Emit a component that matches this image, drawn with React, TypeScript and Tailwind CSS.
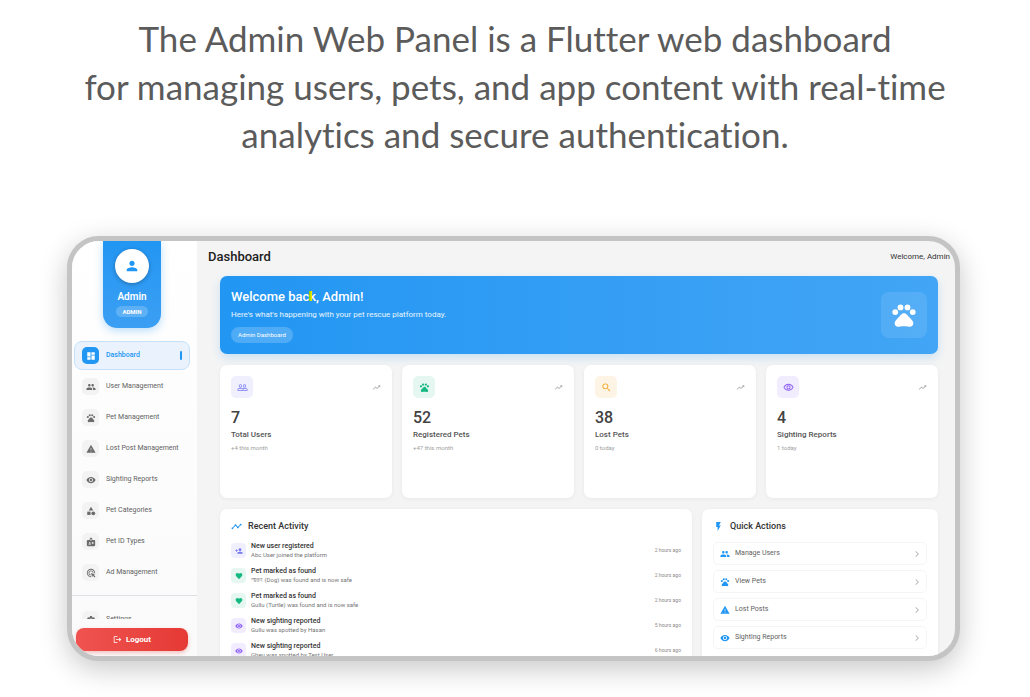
import type { IconType } from "react-icons";
import {
  MdAdsClick, MdBadge, MdCategory, MdChevronRight, MdDashboard, MdFavorite, MdFlashOn,
  MdLogout, MdOutlineVisibility, MdPeople, MdPeopleOutline, MdPerson, MdPersonAdd, MdPets,
  MdSearch, MdSettings, MdTimeline, MdTrendingUp, MdVisibility, MdWarning,
} from "react-icons/md";

type NavItem = { label: string; icon: IconType };
type Stat = { label: string; value: string; note: string; icon: IconType; tone: string };
type Activity = { title: string; detail: string; time: string; icon: IconType; tone: string };

const INDIGO = "bg-[#efeffe] text-[#7679f1]";
const GREEN = "bg-[#e6f7f1] text-[#14b981]";
const AMBER = "bg-[#fef4e5] text-[#f5a623]";
const VIOLET = "bg-[#f2edfe] text-[#8f62f6]";

const navItems: NavItem[] = [
  { label: "User Management", icon: MdPeople },
  { label: "Pet Management", icon: MdPets },
  { label: "Lost Post Management", icon: MdWarning },
  { label: "Sighting Reports", icon: MdVisibility },
  { label: "Pet Categories", icon: MdCategory },
  { label: "Pet ID Types", icon: MdBadge },
  { label: "Ad Management", icon: MdAdsClick },
];

const stats: Stat[] = [
  { label: "Total Users", value: "7", note: "+4 this month", icon: MdPeopleOutline, tone: INDIGO },
  { label: "Registered Pets", value: "52", note: "+47 this month", icon: MdPets, tone: GREEN },
  { label: "Lost Pets", value: "38", note: "0 today", icon: MdSearch, tone: AMBER },
  { label: "Sighting Reports", value: "4", note: "1 today", icon: MdOutlineVisibility, tone: VIOLET },
];

const activities: Activity[] = [
  { title: "New user registered", detail: "Abc User joined the platform", time: "2 hours ago", icon: MdPersonAdd, tone: INDIGO },
  { title: "Pet marked as found", detail: "স্মরণ (Dog) was found and is now safe", time: "2 hours ago", icon: MdFavorite, tone: GREEN },
  { title: "Pet marked as found", detail: "Gullu (Turtle) was found and is now safe", time: "2 hours ago", icon: MdFavorite, tone: GREEN },
  { title: "New sighting reported", detail: "Gullu was spotted by Hasan", time: "5 hours ago", icon: MdVisibility, tone: VIOLET },
  { title: "New sighting reported", detail: "Gheu was spotted by Test User", time: "6 hours ago", icon: MdVisibility, tone: VIOLET },
];

const quickActions: NavItem[] = [
  { label: "Manage Users", icon: MdPeople },
  { label: "View Pets", icon: MdPets },
  { label: "Lost Posts", icon: MdWarning },
  { label: "Sighting Reports", icon: MdVisibility },
];

export default function App() {
  return (
    <div className="min-h-screen bg-white pt-[14px] pb-9 overflow-hidden">
      <h1 className="text-center text-[35px] leading-[48px] text-[#5b5b5b] font-[Lato,sans-serif] [font-variant-ligatures:none]">
        The Admin Web Panel is a Flutter web dashboard
        <br />
        for managing users, pets, and app content with real-time
        <br />
        analytics and secure authentication.
      </h1>

      {/* Device frame */}
      <div className="mt-[78px] ml-[67px] mr-[70px] flex aspect-[21/10] overflow-hidden rounded-[32px] border-[5px] border-[#c4c4c4] bg-[#f4f4f4] font-[Roboto,sans-serif] shadow-[0_8px_28px_rgba(0,0,0,0.22)]">
        <Sidebar />
        <Main />
      </div>
    </div>
  );
}

function Sidebar() {
  return (
    <aside className="flex w-[125px] shrink-0 flex-col bg-linear-to-b from-white to-[#fafafa]">
      {/* Profile */}
      <div className="ml-[31px] flex h-[87px] w-[58px] shrink-0 flex-col items-center rounded-b-[14px] bg-linear-to-b from-[#2196f3] to-[#3b9ff3] pt-2 text-white shadow-[0_3px_8px_rgba(33,150,243,0.3)]">
        <div className="flex size-[34px] items-center justify-center rounded-full bg-white text-[#2196f3] shadow-[0_1px_4px_rgba(0,0,0,0.3)]">
          <MdPerson className="size-4" />
        </div>
        <p className="mt-2 text-[10px] leading-3 font-semibold">Admin</p>
        <span className="mt-[3px] rounded-full bg-white/20 px-[6px] text-[6px] leading-[11px] font-bold">ADMIN</span>
      </div>

      {/* Navigation */}
      <nav className="mt-[13px] flex min-h-0 flex-1 flex-col overflow-hidden">
        <div className="flex flex-col gap-[2px] pr-[7px] pl-[2px]">
          <a href="#dashboard" className="flex h-[29px] items-center rounded-lg border border-[#c5e1f9] bg-[#eaf3fd] px-[7px] text-[7px] font-medium text-[#2196f3]">
            <span className="mr-[7px] flex size-[17px] items-center justify-center rounded-[5px] bg-[#2196f3] text-white">
              <MdDashboard className="size-[10px]" />
            </span>
            Dashboard
            <span className="ml-auto h-[9px] w-[2px] rounded-full bg-[#2196f3]" />
          </a>
          {navItems.map((item) => (
            <NavLink key={item.label} {...item} />
          ))}
        </div>
        <hr className="mt-2 shrink-0 border-[#dfdfe6]" />
        <div className="mt-[9px] pr-[7px] pl-[2px]">
          <NavLink label="Settings" icon={MdSettings} />
        </div>
      </nav>

      <button className="mt-[9px] mr-[9px] mb-[5px] ml-1 flex h-[23px] shrink-0 items-center justify-center gap-1 rounded-lg bg-linear-to-r from-[#ef5350] to-[#e53935] text-[8px] font-bold text-white shadow-[0_2px_4px_rgba(229,57,53,0.3)]">
        <MdLogout className="size-[9px]" />
        Logout
      </button>
    </aside>
  );
}

function NavLink({ label, icon: Icon }: NavItem) {
  return (
    <a href="#" className="flex h-[29px] shrink-0 items-center px-2 text-[7px] text-[#616161]">
      <span className="mr-[7px] flex size-[17px] items-center justify-center rounded-[5px] bg-[#f3f3f3] text-[#6b6b6b]">
        <Icon className="size-[10px]" />
      </span>
      {label}
    </a>
  );
}

function Main() {
  return (
    <main className="flex min-w-0 flex-1 flex-col overflow-hidden">
      <header className="flex h-[35px] shrink-0 items-center justify-between pr-[5px] pb-1 pl-[11px]">
        <h2 className="text-[13px] font-medium text-[#212121]">Dashboard</h2>
        <p className="text-[8px] text-[#333]">Welcome, Admin</p>
      </header>

      <div className="flex flex-col gap-[11px] pr-[17px] pl-[23px]">
        {/* Banner */}
        <section className="flex h-[78px] items-center justify-between rounded-[7px] bg-linear-to-r from-[#2196f3] to-[#42a5f5] px-[11px] text-white shadow-[0_4px_10px_rgba(33,150,243,0.2)]">
          <div className="pt-[2px]">
            <h3 className="text-[13px] leading-4 font-medium">
              Welcome bac
              <span className="relative">
                k
                {/* text cursor mark */}
                <span className="absolute top-[2px] left-0 h-[10px] w-[3px] bg-linear-to-r from-[#7cc800] to-[#ffee00]" />
              </span>
              , Admin!
            </h3>
            <p className="mt-1 text-[8px] leading-3 text-white/90">
              Here's what's happening with your pet rescue platform today.
            </p>
            <span className="mt-[6px] block w-fit rounded-full bg-white/20 px-[7px] text-[6px] leading-4">Admin Dashboard</span>
          </div>
          <div className="flex size-[46px] items-center justify-center rounded-lg bg-white/10">
            <MdPets className="size-7" />
          </div>
        </section>

        {/* Stats */}
        <section className="grid grid-cols-4 gap-[10px]">
          {stats.map((stat) => (
            <StatCard key={stat.label} {...stat} />
          ))}
        </section>

        <div className="grid grid-cols-[2fr_1fr] gap-[10px]">
          <RecentActivity />
          <QuickActions />
        </div>
      </div>
    </main>
  );
}

function StatCard({ label, value, note, icon: Icon, tone }: Stat) {
  return (
    <article className="h-[133px] rounded-[7px] bg-white p-[11px] shadow-[0_1px_4px_rgba(0,0,0,0.05)]">
      <div className="flex items-center justify-between">
        <span className={`flex size-[22px] items-center justify-center rounded-[5px] ${tone}`}>
          <Icon className="size-[11px]" />
        </span>
        <MdTrendingUp className="size-[9px] text-[#a8a8a8]" />
      </div>
      <p className="mt-[10px] text-[16px] leading-5 font-medium text-[#424242]">{value}</p>
      <p className="mt-[2px] text-[8px] leading-[10px] font-medium text-[#555]">{label}</p>
      <p className="mt-1 text-[6px] leading-2 text-[#9e9e9e]">{note}</p>
    </article>
  );
}

function RecentActivity() {
  return (
    <section className="rounded-[7px] bg-white p-[11px] shadow-[0_1px_4px_rgba(0,0,0,0.05)]">
      <h3 className="flex items-center gap-[6px] text-[9px] leading-3 font-medium text-[#333]">
        <MdTimeline className="size-[11px] text-[#2196f3]" />
        Recent Activity
      </h3>
      <ul className="mt-[6px]">
        {activities.map(({ title, detail, time, icon: Icon, tone }, i) => (
          <li key={i} className="flex h-[25px] items-center">
            <span className={`mr-[5px] flex size-[15px] items-center justify-center rounded-[4px] ${tone}`}>
              <Icon className="size-2" />
            </span>
            <div>
              <p className="text-[7px] leading-[9px] font-medium text-[#333]">{title}</p>
              <p className="text-[6px] leading-2 text-[#757575]">{detail}</p>
            </div>
            <time className="ml-auto text-[5px] text-[#8a8a8a]">{time}</time>
          </li>
        ))}
      </ul>
    </section>
  );
}

function QuickActions() {
  return (
    <section className="rounded-[7px] bg-white p-[11px] shadow-[0_1px_4px_rgba(0,0,0,0.05)]">
      <h3 className="flex items-center gap-[6px] text-[9px] leading-3 font-medium text-[#333]">
        <MdFlashOn className="size-[11px] text-[#2196f3]" />
        Quick Actions
      </h3>
      <div className="mt-[10px] flex flex-col gap-[5px]">
        {quickActions.map(({ label, icon: Icon }) => (
          <button key={label} className="flex h-[23px] items-center rounded-[5px] border border-[#f5f5f5] px-[6px] text-[7px] text-[#616161]">
            <Icon className="mr-[5px] size-[10px] text-[#2196f3]" />
            {label}
            <MdChevronRight className="-mr-[3px] ml-auto size-3 text-[#bdbdbd]" />
          </button>
        ))}
      </div>
    </section>
  );
}
